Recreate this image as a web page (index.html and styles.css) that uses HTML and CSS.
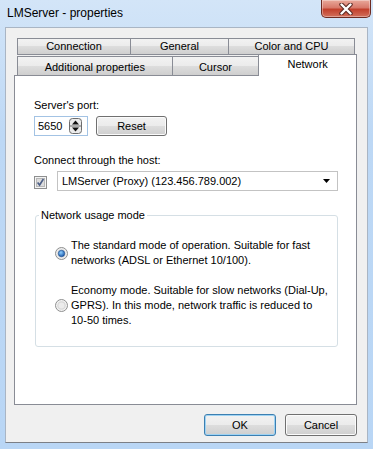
FILE: index.html
```html
<!DOCTYPE html>
<html lang="en">
<head>
  <meta charset="UTF-8">
  <meta name="viewport" content="width=device-width, initial-scale=1.0"/>
  <title>LMServer - properties</title>
  <link rel="stylesheet" href="styles.css">
</head>
<body>
  <div class="window">
    <div class="titlebar">
      <span class="title">LMServer - properties</span>
      <div class="close-btn">
        <svg width="16" height="12" viewBox="0 0 16 12">
          <path d="M3.5 1.5l9 9M12.5 1.5l-9 9" stroke="#5a2a24" stroke-width="4.4" stroke-linecap="round"/>
          <path d="M3.5 1.5l9 9M12.5 1.5l-9 9" stroke="#ffffff" stroke-width="2.4" stroke-linecap="round"/>
        </svg>
      </div>
    </div>

    <div class="client">
      <div class="tab-row row-back">
        <div class="tab" style="width:114px">Connection</div>
        <div class="tab" style="width:99px">General</div>
        <div class="tab" style="width:127px">Color and CPU</div>
      </div>
      <div class="tab-row row-front">
        <div class="tab" style="width:156px">Additional properties</div>
        <div class="tab" style="width:88px">Cursor</div>
        <div class="tab active" style="width:99px">Network</div>
      </div>

      <div class="panel">
        <div class="label first">Server's port:</div>
        <div class="port-row">
          <div class="spin">
            <span class="spin-value">5650</span>
            <svg width="13" height="16" viewBox="0 0 13 16">
              <rect x="0.5" y="0.5" width="12" height="15" rx="3" fill="#ebebeb" stroke="#6c6c6c"/>
              <line x1="1" y1="8" x2="12" y2="8" stroke="#6c6c6c"/>
              <path d="M3 6.5h7L6.5 2.5z" fill="#111"/>
              <path d="M3 9.5h7L6.5 13.5z" fill="#111"/>
            </svg>
          </div>
          <button class="btn reset">Reset</button>
        </div>

        <div class="label">Connect through the host:</div>
        <div class="host-row">
          <svg class="check" width="13" height="13" viewBox="0 0 13 13">
            <rect x="0.5" y="0.5" width="12" height="12" fill="#f4f4f4" stroke="#8e8f8f"/>
            <rect x="2.5" y="2.5" width="8" height="8" fill="#dcdcdc" stroke="#b8b8b8"/>
            <path d="M3.6 6.4l2 2.6 3.8-6" fill="none" stroke="#4c5f87" stroke-width="1.6"/>
          </svg>
          <div class="combo">
            <span>LMServer (Proxy) (123.456.789.002)</span>
            <svg width="7" height="4" viewBox="0 0 7 4"><path d="M0 0h7L3.5 4z" fill="#000"/></svg>
          </div>
        </div>

        <fieldset class="group">
          <legend>Network usage mode</legend>
          <div class="options">
            <div class="option">
              <svg width="13" height="13" viewBox="0 0 13 13">
                <defs>
                  <radialGradient id="dot" cx="0.4" cy="0.35" r="0.7">
                    <stop offset="0" stop-color="#8fd0ff"/>
                    <stop offset="1" stop-color="#1553a8"/>
                  </radialGradient>
                </defs>
                <circle cx="6.5" cy="6.5" r="6" fill="#eeeeee" stroke="#8e8f8f"/>
                <circle cx="6.5" cy="6.5" r="4.3" fill="#dcdcdc"/>
                <circle cx="6.5" cy="6.5" r="3.2" fill="url(#dot)" stroke="#1a4a8a" stroke-width="0.6"/>
              </svg>
              <span>The standard mode of operation. Suitable for fast<br>networks (ADSL or Ethernet 10/100).</span>
            </div>
            <div class="option">
              <svg width="13" height="13" viewBox="0 0 13 13">
                <circle cx="6.5" cy="6.5" r="6" fill="#f2f2f2" stroke="#8e8f8f"/>
                <circle cx="6.5" cy="6.5" r="4.3" fill="#d8d8d8"/>
                <circle cx="6.5" cy="6.5" r="3" fill="#ececec"/>
              </svg>
              <span>Economy mode. Suitable for slow networks (Dial-Up,<br>GPRS). In this mode, network traffic is reduced to<br>10-50 times.</span>
            </div>
          </div>
        </fieldset>
      </div>

      <div class="buttons">
        <button class="btn default">OK</button>
        <button class="btn">Cancel</button>
      </div>
    </div>
  </div>
</body>
</html>
```

FILE: styles.css
```css
body {
  margin: 0;
  font-family: 'Liberation Sans', Arial, sans-serif;
  font-size: 11px;
  color: #000;
}
.window {
  width: 373px;
  height: 449px;
  box-sizing: border-box;
  padding: 0 5px 6px;
  background: linear-gradient(to bottom, #d3e5f8 0%, #bdd8f5 30%, #b9d6f5 100%);
  display: flex;
  flex-direction: column;
}
.titlebar {
  height: 27px;
  display: flex;
  justify-content: space-between;
  align-items: flex-start;
  margin: 0 -3px 0 2px;
}
.title {
  padding-top: 5px;
  font-size: 12px;
  line-height: 16px;
}
.close-btn {
  width: 50px;
  height: 18px;
  box-sizing: border-box;
  border: 1px solid #6e2b22;
  border-top: none;
  border-radius: 0 0 5px 5px;
  background: linear-gradient(to bottom, #e9a99b 0%, #d8796a 45%, #c2402c 55%, #d2705c 100%);
  box-shadow: inset 0 0 0 1px rgba(255,255,255,0.35);
  display: flex;
  align-items: center;
  justify-content: center;
}
.client {
  flex: 1;
  background: #f0f0f0;
  border: 1px solid #a9b5c4;
  border-bottom-color: #7b7f86;
  padding: 10px 10px 0 8px;
  display: flex;
  flex-direction: column;
}
.tab-row {
  display: flex;
  margin-left: 3px;
}
.tab {
  box-sizing: border-box;
  border: 1px solid #898c95;
  background: linear-gradient(to bottom, #f2f2f2 0%, #ebebeb 50%, #dddddd 50%, #cfcfcf 100%);
  text-align: center;
  line-height: 15px;
}
.tab + .tab {
  margin-left: -1px;
}
.row-back .tab {
  height: 17px;
}
.row-front {
  margin-top: -1px;
  align-items: flex-end;
  position: relative;
  z-index: 1;
}
.row-front .tab {
  height: 19px;
  border-bottom: none;
  line-height: 17px;
  padding-top: 2px;
}
.row-front .tab.active {
  height: 22px;
  margin-bottom: -1px;
  background: #fff;
  padding-top: 1px;
}
.panel {
  height: 330px;
  box-sizing: border-box;
  border: 1px solid #898c95;
  background: #fff;
  padding: 0 18px 0 19px;
}
.label {
  line-height: 14px;
  margin-top: 17px;
}
.label.first {
  margin-top: 22px;
}
.port-row {
  display: flex;
  gap: 8px;
  margin-top: 4px;
}
.spin {
  width: 54px;
  height: 20px;
  box-sizing: border-box;
  border: 1px solid #a3c3e4;
  display: flex;
  align-items: center;
  justify-content: space-between;
  padding: 0 5px 0 3px;
}
.btn {
  font-family: inherit;
  font-size: 11px;
  color: #000;
  border: 1px solid #707070;
  border-radius: 3px;
  background: linear-gradient(to bottom, #f2f2f2 0%, #ebebeb 50%, #dddddd 50%, #cfcfcf 100%);
  box-shadow: inset 0 0 0 1px #fbfbfb;
  padding: 0;
}
.reset {
  width: 71px;
  height: 20px;
}
.host-row {
  display: flex;
  align-items: center;
  gap: 10px;
  margin-top: 4px;
}
.check {
  flex: none;
  margin-top: 3px;
}
.combo {
  flex: 1;
  height: 20px;
  box-sizing: border-box;
  border: 1px solid #c3c3c3;
  display: flex;
  align-items: center;
  justify-content: space-between;
  padding: 0 7px 0 4px;
}
.group {
  margin: 17px 0 0 1px;
  padding: 0;
  border: 1px solid #d5dfe5;
  border-radius: 3px;
  min-width: 0;
}
.group legend {
  margin-left: 3px;
  padding: 0 2px;
  line-height: 14px;
}
.options {
  padding: 16px 0 18px 19px;
}
.option {
  display: flex;
  align-items: center;
  gap: 3px;
  line-height: 15px;
  white-space: nowrap;
}
.option + .option {
  margin-top: 15px;
}
.option svg {
  flex: none;
}
.buttons {
  display: flex;
  justify-content: flex-end;
  gap: 9px;
  margin-top: 9px;
}
.buttons .btn {
  width: 72px;
  height: 22px;
}
.btn.default {
  border-color: #3c7fb1;
  box-shadow: inset 0 0 0 1px #9fd3f3;
}
```
